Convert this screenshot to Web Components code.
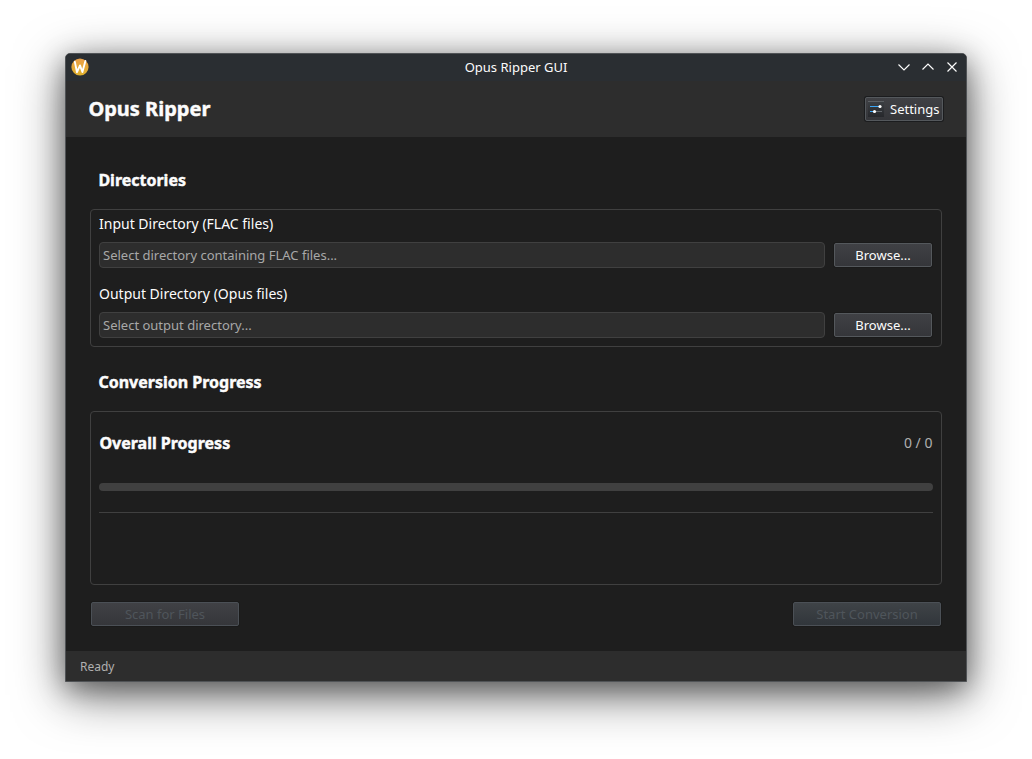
<!DOCTYPE html>
<html lang="en">
<head>
<meta charset="utf-8">
<title>Opus Ripper GUI</title>
<style>
html,body{margin:0;height:100%;background:#fff;overflow:hidden}
body{font:13px "Noto Sans",sans-serif;color:#fcfcfc;padding:53px 65px;box-sizing:border-box}
</style>
</head>
<body>
<app-window caption="Opus Ripper GUI">
  <app-header slot="header" heading="Opus Ripper">
    <push-button compact>
      <settings-icon slot="icon"></settings-icon>Settings
    </push-button>
  </app-header>
  <section-title style="--h:72px;--pad:14px">Directories</section-title>
  <group-box style="height:138px">
    <dir-field label="Input Directory (FLAC files)" placeholder="Select directory containing FLAC files..."></dir-field>
    <dir-field label="Output Directory (Opus files)" placeholder="Select output directory..."></dir-field>
  </group-box>
  <section-title style="--h:64px;--pad:6px">Conversion Progress</section-title>
  <group-box style="height:174px;padding-right:8px">
    <progress-panel heading="Overall Progress" count="0 / 0"></progress-panel>
  </group-box>
  <action-row>
    <push-button disabled style="width:148px">Scan for Files</push-button>
    <push-button disabled style="width:148px;--top:#3f4347;--bot:#31363b">Start Conversion</push-button>
  </action-row>
  <status-bar slot="status">Ready</status-bar>
</app-window>
<script>
const define = (name, html) => customElements.define(name, class extends HTMLElement {
  constructor() {
    super();
    const t = document.createElement('template');
    t.innerHTML = html;
    this.attachShadow({mode: 'open'}).appendChild(t.content.cloneNode(true));
  }
  connectedCallback() {
    this.shadowRoot.querySelectorAll('[data-attr]').forEach(n => {
      n.textContent = this.getAttribute(n.dataset.attr);
    });
  }
});

define('wayland-logo', `
<style>:host{display:block;width:18px;height:18px}svg{display:block}</style>
<svg width="18" height="18" viewBox="0 0 18 18">
  <defs><linearGradient id="g" x1="0" y1="0" x2="0" y2="1"><stop offset="0" stop-color="#eba04a"/><stop offset="1" stop-color="#dfb02c"/></linearGradient></defs>
  <circle cx="9" cy="9" r="8.6" fill="url(#g)"/>
  <path d="M3.8 3.6 L6 14.2 L9 7.4 L11.4 14 L14.4 3" fill="none" stroke="#fff" stroke-width="1.9" stroke-linejoin="round" stroke-linecap="round"/>
</svg>`);

define('window-controls', `
<style>:host{display:flex;gap:6px}svg{display:block;width:18px;height:18px;fill:none;stroke:#fcfcfc;stroke-width:1.15}</style>
<svg viewBox="0 0 18 18"><path d="M3.5 6.5 L9 12 L14.5 6.5"/></svg>
<svg viewBox="0 0 18 18"><path d="M3.5 11.5 L9 6 L14.5 11.5"/></svg>
<svg viewBox="0 0 18 18"><path d="M4.5 4.5 L13.5 13.5 M13.5 4.5 L4.5 13.5"/></svg>`);

define('settings-icon', `
<style>:host{display:block;width:16px;height:16px}svg{display:block}</style>
<svg width="16" height="16" viewBox="0 0 16 16">
  <defs><linearGradient id="g" x1="0" y1="0" x2="0" y2="1"><stop offset="0" stop-color="#3c4044"/><stop offset="1" stop-color="#26282c"/></linearGradient></defs>
  <rect width="16" height="16" fill="url(#g)"/><rect width="16" height="1" fill="#5c6064"/>
  <rect x="2" y="5" width="10" height="1" fill="#3ba6f5"/>
  <circle cx="12" cy="5.5" r="1.6" fill="#fff"/>
  <rect x="2" y="10" width="4" height="1" fill="#3ba6f5"/><rect x="7" y="10" width="7" height="1" fill="#63686d"/>
  <circle cx="6.5" cy="10.5" r="1.6" fill="#fff"/>
</svg>`);

define('push-button', `
<style>
:host{display:flex;box-sizing:border-box;height:24px;width:98px;align-items:center;justify-content:center;
 border:1px solid #54585c;border-radius:2px;background:linear-gradient(var(--top,#404145),var(--bot,#35363a));
 box-shadow:0 0 0 1px rgba(0,0,0,.13);white-space:nowrap;line-height:18px;color:#fcfcfc}
:host([disabled]){color:#4f555b;border-color:#4b5056}
:host([compact]){width:78px;gap:6px;box-shadow:0 0 0 1px #1b1c1e;justify-content:flex-start;padding-left:2px}
</style><slot name="icon"></slot><span><slot></slot></span>`);

define('app-header', `
<style>:host{display:flex;height:56px;box-sizing:border-box;padding:0 23px 0 22.4px;background:#2d2d2d;align-items:center;justify-content:space-between}
h1{margin:0 0 1px;font-size:20px;font-weight:700;line-height:30px;-webkit-text-stroke:.45px currentColor}</style>
<h1 data-attr="heading"></h1><slot></slot>`);

define('section-title', `
<style>:host{display:block;box-sizing:border-box;height:var(--h);padding:calc(var(--pad) + 18px) 0 0 8.4px;font-size:16px;font-weight:700;line-height:22px;-webkit-text-stroke:.45px currentColor}</style><slot></slot>`);

define('group-box', `
<style>:host{display:flex;flex-direction:column;gap:16px;box-sizing:border-box;border:1px solid #404040;border-radius:4px;padding:4px 9px 8px 8px}</style><slot></slot>`);

define('dir-field', `
<style>:host{display:block;height:54px}
.label{font-size:14px;line-height:20px;height:28px}
.row{display:flex;gap:9px;align-items:center;height:26px}
.input{flex:1;box-sizing:border-box;height:26px;border:1px solid #404040;border-radius:4px;background:#2d2d2d;color:#a8a8a8;padding-left:3px;line-height:24px}
</style>
<div class="label" data-attr="label"></div>
<div class="row"><div class="input" data-attr="placeholder"></div><push-button>Browse...</push-button></div>`);

define('progress-panel', `
<style>.top{display:flex;justify-content:space-between;align-items:center;height:54px}
b{font-size:16px;line-height:22px;padding-left:.4px;-webkit-text-stroke:.45px currentColor}
.count{font-size:14px;line-height:20px;padding-right:.6px;color:#b0b0b0}
.bar{height:8px;border-radius:4px;background:#404040;margin-top:13px}
.line{height:1px;background:#404040;margin-top:21px}</style>
<div class="top"><b data-attr="heading"></b><span class="count" data-attr="count"></span></div>
<div class="bar"></div><div class="line"></div>`);

define('action-row', `
<style>:host{display:flex;justify-content:space-between;padding:17px 1px 0}</style><slot></slot>`);

define('status-bar', `
<style>:host{display:block;box-sizing:border-box;height:30px;background:#2d2d2d;padding:1px 0 0 14px;font-size:12px;line-height:30px;color:#b0b0b0}</style><slot></slot>`);

define('app-window', `
<style>
:host{display:flex;flex-direction:column;box-sizing:border-box;width:902px;height:629px;border:1px solid #505356;border-radius:5px 5px 0 0;overflow:hidden;background:#1e1e1e;
 box-shadow:0 13px 50px rgba(0,0,0,.55),0 7px 26px rgba(0,0,0,.35)}
.bar{display:grid;grid-template-columns:1fr auto 1fr;align-items:center;height:27px;box-sizing:border-box;background:#2a2e32;padding:0 5px 1px}
window-controls{justify-self:end}
main{flex:1;padding:0 24px}
</style>
<div class="bar"><wayland-logo></wayland-logo><span data-attr="caption"></span><window-controls></window-controls></div>
<slot name="header"></slot><main><slot></slot></main><slot name="status"></slot>`);
</script>
</body>
</html>
